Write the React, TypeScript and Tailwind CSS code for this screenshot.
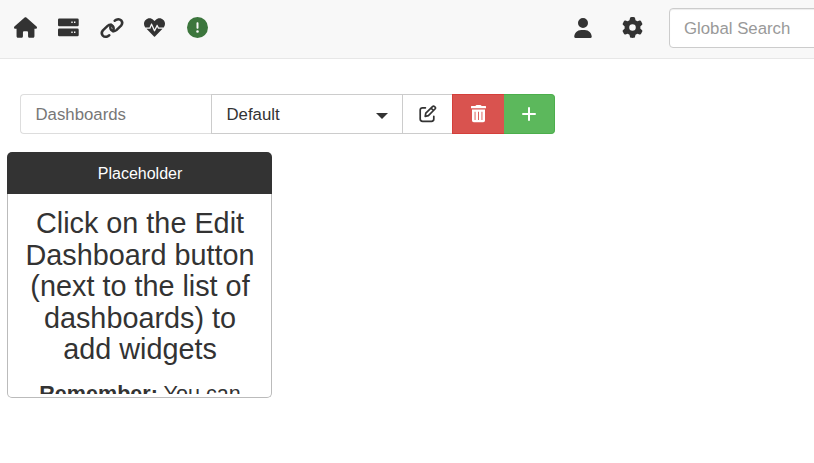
import React from 'react';
import { FaHouse, FaUser, FaGear, FaCircleExclamation } from 'react-icons/fa6';
import { FaHeartbeat } from 'react-icons/fa';

function ServerIcon() {
  return (
    <svg className="h-[19px] w-[21px]" viewBox="0 0 21 19" fill="currentColor">
      <path fillRule="evenodd" d="M1.3 .4H19.4Q20.7 .4 20.7 1.7V6.9Q20.7 8.2 19.4 8.2H1.3Q0 8.2 0 6.9V1.7Q0 .4 1.3 .4ZM13.3 3.5V5H14.7V3.5ZM16 3.5V5H17.4V3.5Z" />
      <path fillRule="evenodd" d="M1.3 10.4H19.4Q20.7 10.4 20.7 11.7V16.9Q20.7 18.2 19.4 18.2H1.3Q0 18.2 0 16.9V11.7Q0 10.4 1.3 10.4ZM13.3 13.5V15H14.7V13.5ZM16 13.5V15H17.4V13.5Z" />
    </svg>
  );
}

function LinkIcon() {
  return (
    <svg className="h-[20px] w-[24px] overflow-visible" viewBox="0 0 24 20" fill="none" stroke="currentColor" strokeWidth="2.5" strokeLinecap="round" strokeLinejoin="round">
      <path d="M9.3 17.2 8 18.1Q5 19.8 2.8 17.6 .6 15.1 2.9 12.4L7.6 7.9Q10.3 5.7 12.6 7.8 14.6 10.3 12.9 13.2" />
      <path d="M14.7 2.8 16 1.9Q19 .2 21.2 2.4 23.4 4.9 21.1 7.6L16.4 12.1Q13.7 14.3 11.4 12.2 9.4 9.7 11.1 6.8" />
    </svg>
  );
}

function EditIcon() {
  return (
    <svg className="h-[18px] w-[18px]" viewBox="0 0 18 18" fill="none" stroke="currentColor" strokeWidth="1.7" strokeLinecap="round" strokeLinejoin="round">
      <path d="M6.4 2.8H3.6Q1.2 2.8 1.2 5.1V14Q1.2 16.3 3.6 16.3H12.5Q14.8 16.3 14.8 14V11.3" />
      <path d="M6.2 11.4 6.8 8.2 13.5 1.6Q14.5.7 15.6 1.6L16 2Q17 3 16 4L9.4 10.7ZM12.1 3.1 14.5 5.5" />
    </svg>
  );
}

function TrashIcon() {
  return (
    <svg className="h-[18px] w-[15px]" viewBox="0 0 15 18" fill="currentColor">
      <path d="M0 1.5Q0 1 .5 1H4.3L4.8.4Q5.1 0 5.6 0H9.4Q9.9 0 10.2.4L10.7 1H14.5Q15 1 15 1.5V3.2H0Z" />
      <path fillRule="evenodd" d="M1 4.5H14V15.4Q14 17.2 12.2 17.2H2.8Q1 17.2 1 15.4ZM3.6 6.7V15H4.5V6.7ZM7.05 6.7V15H7.95V6.7ZM10.5 6.7V15H11.4V6.7Z" />
    </svg>
  );
}

export default function App() {
  return (
    <div className="h-[463px] w-[814px] overflow-hidden bg-white font-['Liberation_Sans',Arial,sans-serif] text-[#333]">
      <nav className="flex h-[59px] items-start border-b border-[#e7e7e7] bg-[#f8f8f8] pl-[14px]">
        <div className="flex h-[55px] items-center">
          <span className="flex w-[23px] justify-center text-[23px]"><FaHouse /></span>
          <span className="ml-[21px] flex w-[21px]"><ServerIcon /></span>
          <span className="ml-[20px] flex w-6 pl-px"><LinkIcon /></span>
          <span className="ml-[20px] flex w-[23px] justify-center text-[21px]"><FaHeartbeat /></span>
          <span className="ml-[20px] flex w-[23px] justify-center text-[21px] text-[#3c763d]"><FaCircleExclamation /></span>
        </div>
        <div className="ml-[363px] flex h-[55px] items-center gap-7 text-[21px]">
          <span className="flex w-[21px] justify-center text-[20px]"><FaUser /></span>
          <FaGear className="ml-px" />
        </div>
        <input className="mt-2 ml-[26px] h-10 w-[200px] shrink-0 rounded border border-[#ccc] bg-white px-[14px] pt-[2px] text-[16.8px] shadow-[inset_0_1px_1px_rgba(0,0,0,0.075)] placeholder:text-[#999]" placeholder="Global Search" />
      </nav>

      <div className="mt-[35px] ml-5 flex h-10 text-[16.8px]">
        <div className="flex w-[191px] items-center rounded-l border border-r-0 border-[#ddd] pt-px pl-[14.5px] text-[#777]">Dashboards</div>
        <button className="flex w-[192px] items-center justify-between border border-[#ccc] pt-px pr-[14px] pl-[14.5px]">
          Default
          <span className="mt-[2px] border-x-[6px] border-t-[6px] border-x-transparent border-t-[#333]" />
        </button>
        <button className="flex w-[49px] items-center justify-center border-y border-[#ccc]"><EditIcon /></button>
        <button className="flex w-[52px] items-center justify-center border border-r-0 border-[#d43f3a] bg-[#d9534f] text-white"><TrashIcon /></button>
        <button className="flex w-[51px] items-center justify-center rounded-r border border-l-0 border-[#4cae4c] bg-[#5cb85c] text-white">
          <svg className="h-[14px] w-[14px]" viewBox="0 0 14 14" stroke="currentColor" strokeWidth="2" strokeLinecap="round"><path d="M7 1V13M1 7H13" /></svg>
        </button>
      </div>

      <section className="mt-[18px] ml-[7px] h-[246px] w-[265px]">
        <header className="flex h-[42px] items-center justify-center rounded-t-[5px] bg-[#333] pt-px pl-px text-base text-white">Placeholder</header>
        <div className="h-[204px] rounded-b-[5px] border border-t-0 border-[#bbb] bg-white px-[14px] pb-[3px]">
          <div className="flow-root h-[200px] overflow-hidden pl-px text-center">
            <h1 className="mt-[14px] text-[28.8px] leading-[31.6px] whitespace-nowrap">Click on the Edit<br />Dashboard button<br />(next to the list of<br />dashboards) to<br />add widgets</h1>
            <p className="mt-[15px] text-[21.6px] leading-[26px]"><b>Remember:</b> You can</p>
          </div>
        </div>
      </section>
    </div>
  );
}
